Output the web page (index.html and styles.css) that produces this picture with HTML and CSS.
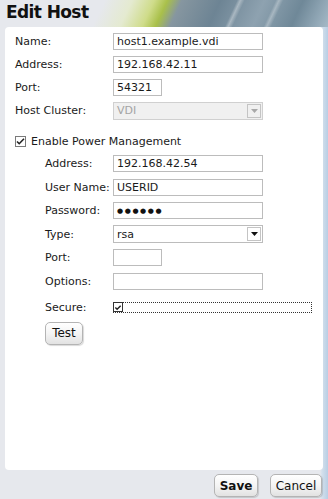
FILE: index.html
```html
<!DOCTYPE html>
<html lang="en">
<head>
    <meta charset="UTF-8">
    <meta name="viewport" content="width=device-width, initial-scale=1.0">
    <title>Edit Host</title>
    <link rel="stylesheet" href="styles.css">
</head>
<body>
    <div class="header">
        <h1>Edit Host</h1>
    </div>

    <div class="panel">
        <div class="row">
            <label>Name:</label>
            <input class="field" type="text" value="host1.example.vdi">
        </div>
        <div class="row">
            <label>Address:</label>
            <input class="field" type="text" value="192.168.42.11">
        </div>
        <div class="row">
            <label>Port:</label>
            <input class="field short" type="text" value="54321">
        </div>
        <div class="row">
            <label>Host Cluster:</label>
            <div class="select disabled">
                <span>VDI</span>
                <span class="arrow"><svg width="7" height="4" viewBox="0 0 7 4"><path d="M0 0h7L3.5 4z" fill="#a8a8a8"/></svg></span>
            </div>
        </div>

        <div class="check-row">
            <span class="check"><svg width="9" height="9" viewBox="0 0 9 9"><path d="M1 4.5l2.2 2.2L8 1.8" fill="none" stroke="#222" stroke-width="1.6"/></svg></span>
            <span>Enable Power Management</span>
        </div>

        <div class="sub">
            <div class="row">
                <label>Address:</label>
                <input class="field" type="text" value="192.168.42.54">
            </div>
            <div class="row">
                <label>User Name:</label>
                <input class="field" type="text" value="USERID">
            </div>
            <div class="row">
                <label>Password:</label>
                <div class="field dots">&#9679;&#9679;&#9679;&#9679;&#9679;&#9679;</div>
            </div>
            <div class="row">
                <label>Type:</label>
                <div class="select">
                    <span>rsa</span>
                    <span class="arrow"><svg width="7" height="4" viewBox="0 0 7 4"><path d="M0 0h7L3.5 4z" fill="#111"/></svg></span>
                </div>
            </div>
            <div class="row">
                <label>Port:</label>
                <input class="field short" type="text" value="">
            </div>
            <div class="row">
                <label>Options:</label>
                <input class="field" type="text" value="">
            </div>
            <div class="row secure">
                <label>Secure:</label>
                <div class="focus">
                    <span class="check small"><svg width="9" height="9" viewBox="0 0 9 9"><path d="M1.5 4.5l2 2L7.5 2.5" fill="none" stroke="#222" stroke-width="1.6"/></svg></span>
                </div>
            </div>
            <button class="btn test">Test</button>
        </div>
    </div>

    <div class="footer">
        <button class="btn save">Save</button>
        <button class="btn">Cancel</button>
    </div>
</body>
</html>
```

FILE: styles.css
```css
body {
    margin: 0;
    width: 328px;
    height: 499px;
    overflow: hidden;
    font-family: "DejaVu Sans", Tahoma, sans-serif;
    font-size: 11px;
    color: #1a1a1a;
    background: linear-gradient(to right, #e6e8ed 0, #e6e8ed 320px, #d4e0ec 322px, #b8cee4 328px);
}
.header {
    height: 27px;
    padding-left: 6px;
    background:
        linear-gradient(115deg, transparent 0, transparent 215px, rgba(255,255,255,0.35) 218px, transparent 222px, transparent 250px, rgba(255,255,255,0.3) 253px, transparent 257px),
        linear-gradient(115deg, #e6e8ed 0, #e6e8ed 95px, #e4ead0 120px, #cfdc8a 140px, #a9c04a 152px, #8696a0 165px, #6d8494 200px, #8ea2b0 240px, #6f8898 275px, #9fb4c2 305px, #c8d6e0 330px);
}
h1 {
    margin: 0;
    font-size: 17px;
    font-weight: bold;
    line-height: 25px;
    color: #111;
    letter-spacing: -0.6px;
}
.panel {
    margin: 0 5px;
    height: 431px;
    padding: 6px 10px;
    background-color: white;
    border-radius: 4px;
}
.row {
    display: flex;
    align-items: center;
    height: 17px;
    margin-bottom: 6px;
}
.row label {
    width: 98px;
    flex: none;
}
.field {
    box-sizing: border-box;
    width: 150px;
    height: 17px;
    margin: 0;
    padding: 0 3px;
    border: 1px solid #bcbcbc;
    font-family: inherit;
    font-size: 11px;
    color: #1a1a1a;
    outline: none;
}
.short {
    width: 49px;
}
.dots {
    display: flex;
    align-items: center;
    font-size: 7px;
    letter-spacing: 1.6px;
    color: #111;
}
.select {
    box-sizing: border-box;
    width: 150px;
    height: 18px;
    padding-left: 3px;
    border: 1px solid #bcbcbc;
    display: flex;
    align-items: center;
    justify-content: space-between;
}
.select.disabled {
    background-color: #f0f0f0;
    color: #a4a4a4;
    border-color: #d0d0d0;
}
.arrow {
    box-sizing: border-box;
    width: 14px;
    height: 14px;
    margin-right: 1px;
    border: 1px solid #c4c4c4;
    display: flex;
    align-items: center;
    justify-content: center;
}
.check-row {
    display: flex;
    align-items: center;
    gap: 5px;
    margin-top: 16px;
    margin-bottom: 7px;
    height: 13px;
}
.check {
    box-sizing: border-box;
    width: 11px;
    height: 11px;
    border: 1px solid #7a7a7a;
    background: white;
    display: flex;
    align-items: center;
    justify-content: center;
}
.sub {
    padding-left: 30px;
}
.sub .row {
    margin-bottom: 6.6px;
}
.sub .row label {
    width: 68px;
}
.sub .secure {
    margin-top: 12px;
    margin-bottom: 0;
    height: 11px;
}
.focus {
    flex: 1;
    height: 9px;
    border: 1px dotted #333;
    margin-right: 1px;
    display: flex;
    align-items: center;
}
.check.small {
    width: 10px;
    height: 10px;
    margin-left: -1px;
    border-color: #333;
}
.btn {
    height: 23px;
    padding: 0 6px;
    border: 1px solid #b4b4b4;
    border-radius: 5px;
    background: linear-gradient(#ffffff, #f4f4f4 50%, #e2e2e2);
    box-shadow: 1px 1px 1px rgba(0,0,0,0.15);
    font-family: inherit;
    font-size: 12px;
    color: #111;
}
.test {
    margin-top: 9px;
    width: 38px;
    padding: 0;
}
.footer {
    display: flex;
    justify-content: flex-end;
    gap: 12px;
    padding: 4px 6px 0 0;
}
.save {
    font-weight: bold;
    width: 44px;
    padding: 0;
}
.footer .btn:last-child {
    width: 52px;
    padding: 0;
}
```
